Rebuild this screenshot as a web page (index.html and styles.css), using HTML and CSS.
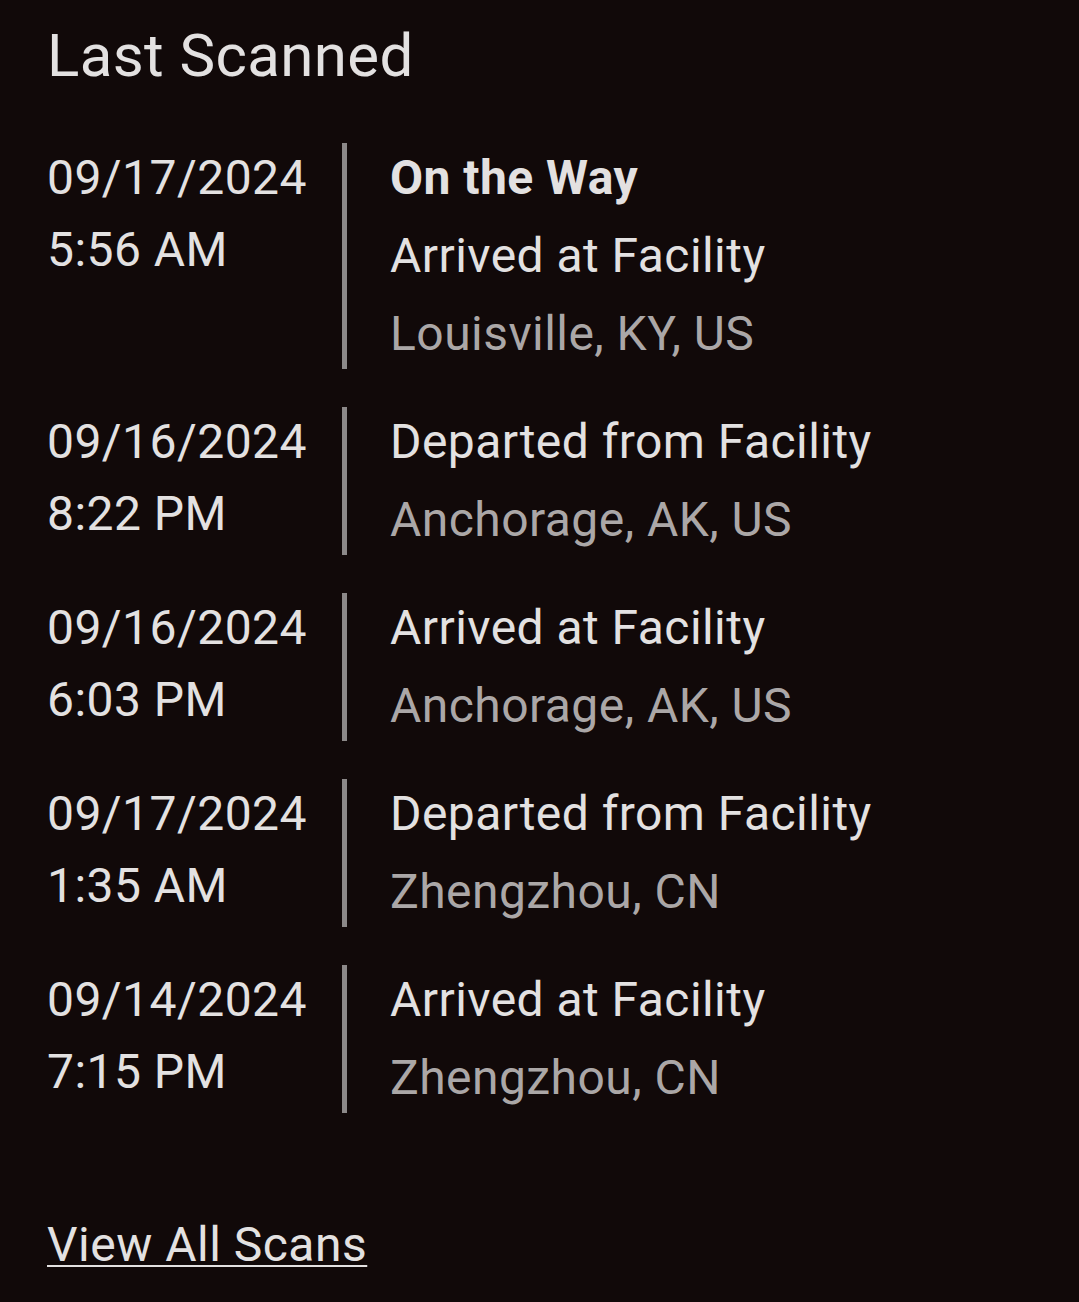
FILE: index.html
```html
<!DOCTYPE html>
<html lang="en">
<head>
<meta charset="utf-8">
<title>Last Scanned</title>
<link rel="stylesheet" href="styles.css">
</head>
<body>
<main class="scans">
  <h1 class="title">Last Scanned</h1>
  <ul class="list">
    <li class="row">
      <div class="when"><div>09/17/2024</div><div>5:56 AM</div></div>
      <div class="divider"></div>
      <div class="what">
        <div class="status">On the Way</div>
        <div>Arrived at Facility</div>
        <div class="place">Louisville, KY, US</div>
      </div>
    </li>
    <li class="row">
      <div class="when"><div>09/16/2024</div><div>8:22 PM</div></div>
      <div class="divider"></div>
      <div class="what">
        <div>Departed from Facility</div>
        <div class="place">Anchorage, AK, US</div>
      </div>
    </li>
    <li class="row">
      <div class="when"><div>09/16/2024</div><div>6:03 PM</div></div>
      <div class="divider"></div>
      <div class="what">
        <div>Arrived at Facility</div>
        <div class="place">Anchorage, AK, US</div>
      </div>
    </li>
    <li class="row">
      <div class="when"><div>09/17/2024</div><div>1:35 AM</div></div>
      <div class="divider"></div>
      <div class="what">
        <div>Departed from Facility</div>
        <div class="place">Zhengzhou, CN</div>
      </div>
    </li>
    <li class="row">
      <div class="when"><div>09/14/2024</div><div>7:15 PM</div></div>
      <div class="divider"></div>
      <div class="what">
        <div>Arrived at Facility</div>
        <div class="place">Zhengzhou, CN</div>
      </div>
    </li>
  </ul>
  <a class="all" href="#">View All Scans</a>
</main>
</body>
</html>
```

FILE: styles.css
```css
html, body {
  margin: 0;
  background: #110909;
}
body {
  font-family: Roboto, "Liberation Sans", sans-serif;
  color: #e3e1e1;
}
.scans {
  padding: 20px 45px 0 47px;
}
.title {
  margin: 0;
  font-size: 60px;
  line-height: 72px;
  font-weight: 400;
  letter-spacing: 0.4px;
}
.list {
  list-style: none;
  margin: 47px 0 0 0;
  padding: 0;
  display: flex;
  flex-direction: column;
  gap: 30px;
}
.row {
  display: flex;
  font-size: 48px;
  letter-spacing: 0.45px;
}
.when {
  width: 295px;
  padding-top: 3px;
  line-height: 72px;
}
.divider {
  width: 5px;
  margin: 4px 0 4px 0;
  background: #8c8989;
}
.what {
  padding-left: 43px;
  line-height: 78px;
}
.status {
  font-weight: 700;
}
.place {
  color: #aba7a7;
}
.all {
  display: inline-block;
  margin-top: 92px;
  font-size: 48px;
  line-height: 72px;
  color: #e3e1e1;
  letter-spacing: 0.5px;
  text-decoration: underline;
  text-decoration-thickness: 2px;
  text-underline-offset: 4px;
}
```
